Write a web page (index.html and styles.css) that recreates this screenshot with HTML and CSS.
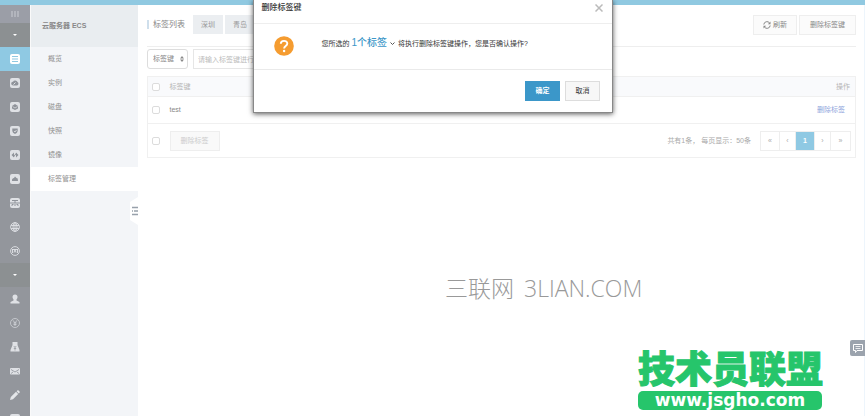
FILE: index.html
```html
<!DOCTYPE html>
<html lang="zh-CN">
<head>
<meta charset="utf-8">
<title>标签管理</title>
<link rel="stylesheet" href="styles.css">
</head>
<body>
<div class="topbar"></div>
<div class="app">
  <nav class="rail" aria-label="产品">
    <button class="rail-menu" aria-label="菜单"><svg width="8" height="6" viewBox="0 0 8 6"><path d="M1 0v6M4 0v6M7 0v6" stroke="#c9ccd2" stroke-width="1"/></svg></button>
    <button class="rail-group" aria-label="展开产品"><svg width="4" height="2" viewBox="0 0 4 2"><path d="M0 0h4L2 2z" fill="#fff"/></svg></button>
    <a class="rail-item active" href="#" aria-label="云服务器"><svg class="icon" viewBox="0 0 10 10"><rect width="10" height="10" rx="2" fill="#fff"/><path d="M2 2.500h6M2 5h6M2 7.500h6" stroke="#8fc8e1" stroke-width="1.200"/></svg></a>
    <a class="rail-item" href="#" aria-label="数据库"><svg class="icon" viewBox="0 0 10 10"><rect width="10" height="10" rx="2" fill="#dfe1e5"/><path d="M2 7a1.800 1.800 0 0 1 1-3.300A2.500 2.500 0 0 1 7.500 4 1.900 1.900 0 0 1 7 7.500H3z" fill="#8f939a"/><path d="M3.500 6.500L5.500 4.500" stroke="#dfe1e5"/></svg></a>
    <a class="rail-item" href="#" aria-label="存储"><svg class="icon" viewBox="0 0 10 10"><rect width="10" height="10" rx="2" fill="#dfe1e5"/><path d="M5 2l3 2v2.500L5 8 2 6.500V4z" fill="#8f939a"/><path d="M2.500 4.500L5 6l2.500-1.500" fill="none" stroke="#dfe1e5" stroke-width=".7"/></svg></a>
    <a class="rail-item" href="#" aria-label="安全"><svg class="icon" viewBox="0 0 10 10"><rect width="10" height="10" rx="2" fill="#dfe1e5"/><path d="M2.300 2.500h5.400V5Q7.500 7 5 8 2.500 7 2.300 5z" fill="#8f939a"/><path d="M4 5l1 1 1.500-2" fill="none" stroke="#dfe1e5" stroke-width=".8"/></svg></a>
    <a class="rail-item" href="#" aria-label="网络"><svg class="icon" viewBox="0 0 10 10"><rect width="10" height="10" rx="2" fill="#dfe1e5"/><path d="M1.500 5L4 2.500v5zM8.500 5L6 7.500v-5z" fill="#8f939a"/><path d="M3.500 7L6.500 3" stroke="#8f939a"/></svg></a>
    <a class="rail-item" href="#" aria-label="云盘"><svg class="icon" viewBox="0 0 10 10"><rect width="10" height="10" rx="2" fill="#dfe1e5"/><path d="M2 7V5.500l1-1.200L4 4l1-1.500L6.500 4l1.200.5L8 7z" fill="#8f939a"/></svg></a>
    <a class="rail-item" href="#" aria-label="负载均衡"><svg class="icon" viewBox="0 0 10 10"><rect width="10" height="10" rx="2" fill="#dfe1e5"/><path d="M2 2.500h6M0 5h10M5 3v2M2 8V6.500h1.500M8 8V6.500H6.500M5 6v2" fill="none" stroke="#8f939a"/></svg></a>
    <a class="rail-item" href="#" aria-label="域名"><svg class="icon" viewBox="0 0 10 10"><g fill="none" stroke="#dfe1e5" stroke-width=".9"><circle cx="5" cy="5" r="4.400"/><ellipse cx="5" cy="5" rx="2" ry="4.400"/><path d="M1 3.500h8M1 6.500h8M5 .5v9"/></g></svg></a>
    <a class="rail-item" href="#" aria-label="监控"><svg class="icon" viewBox="0 0 10 10"><g fill="none" stroke="#dfe1e5" stroke-width=".9"><circle cx="5" cy="5" r="4.400"/><path d="M2.500 3v4M4 6.500l1-3 1 3M7.500 3v4M2 3.500h6"/></g></svg></a>
    <button class="rail-group" aria-label="展开用户中心"><svg width="4" height="2" viewBox="0 0 4 2"><path d="M0 0h4L2 2z" fill="#fff"/></svg></button>
    <a class="rail-item" href="#" aria-label="账号"><svg class="icon" viewBox="0 0 10 10"><circle cx="5" cy="3" r="2.500" fill="#dfe1e5"/><path d="M.5 9.500V8L3.500 6.500V5h3v1.500L9.500 8v1.500z" fill="#dfe1e5"/></svg></a>
    <a class="rail-item" href="#" aria-label="费用"><svg class="icon" viewBox="0 0 10 10"><g fill="none" stroke="#d0d3d8" stroke-width=".8"><circle cx="5" cy="5" r="4.500"/><path d="M3 2.300L5 5l2-2.700M5 5v3M3.500 5h3M3.500 6.500h3"/></g></svg></a>
    <a class="rail-item" href="#" aria-label="续费"><svg class="icon" viewBox="0 0 10 10"><path d="M2.500 0h5v3L9.500 8v1.500H.5V8l2-5z" fill="#dfe1e5"/><path d="M3.800 4L5 5.500 6.200 4M5 5.500v3M3.800 6.500h2.400" fill="none" stroke="#8f939a" stroke-width=".7"/></svg></a>
    <a class="rail-item" href="#" aria-label="消息"><svg class="icon" viewBox="0 0 10 10"><rect y="2" width="10" height="6.500" rx="1" fill="#dfe1e5"/><path d="M1 3.500L5 6l4-2.500M1 7.500l2-1.500M9 7.500L7 6" fill="none" stroke="#8f939a" stroke-width=".8"/></svg></a>
    <a class="rail-item" href="#" aria-label="工单"><svg class="icon" viewBox="0 0 10 10"><path d="M0 10l.8-3L6 1.800 8.200 4 3 9.200zM6.600 1.200L8 0l2 2-1.200 1.400z" fill="#e4e6e9"/></svg></a>
    <a class="rail-item" href="#" aria-label="备案"><svg class="icon" viewBox="0 0 10 10"><rect width="10" height="10" rx="2" fill="#dfe1e5"/><path d="M2 4h6M2 6h6" stroke="#8f939a"/></svg></a>
  </nav>

  <aside class="sidebar">
    <h1 class="product">云服务器 ECS</h1>
    <a class="side-link" href="#">概览</a>
    <a class="side-link" href="#">实例</a>
    <a class="side-link" href="#">磁盘</a>
    <a class="side-link" href="#">快照</a>
    <a class="side-link" href="#">镜像</a>
    <a class="side-link current" href="#">标签管理</a>
    <button class="collapse" aria-label="收起侧栏"><svg width="8" height="28" viewBox="0 0 8 28"><path d="M8 0L0 5v18l8 5z" fill="#fff"/><path d="M2 10.500h6M4 14h4M2 17.500h6M2 14h1" stroke="#98a1ab" stroke-width="1.500"/></svg></button>
  </aside>

  <main class="content">
    <header class="page-head">
      <h2 class="page-title">标签列表</h2>
      <button class="region">深圳</button>
      <button class="region">青岛</button>
      <div class="actions">
        <button class="btn refresh"><svg width="8" height="8" viewBox="0 0 8 8"><path d="M.8 3.500A3.200 3.200 0 0 1 6.600 2M7.200 4.500A3.200 3.200 0 0 1 1.400 6" fill="none" stroke="#888"/><path d="M7.500.5v2.700H4.800zM.5 7.500V4.800h2.700z" fill="#888"/></svg>刷新</button>
        <button class="btn">删除标签键</button>
      </div>
    </header>

    <form class="filters">
      <div class="select-wrap">
        <select class="select" aria-label="筛选字段"><option>标签键</option></select>
        <svg class="arrows" width="4" height="6" viewBox="0 0 4 6"><path d="M0 2.500L2 0l2 2.500zM0 3.500L2 6l2-2.500z" fill="#888"/></svg>
      </div>
      <input class="search" type="text" aria-label="标签键" placeholder="请输入标签键进行精确查询">
    </form>

    <table class="table">
      <thead>
        <tr><th class="check"><input class="box" type="checkbox" aria-label="全选"></th><th>标签键</th><th class="ops">操作</th></tr>
      </thead>
      <tbody>
        <tr><td class="check"><input class="box" type="checkbox" aria-label="选择 test"></td><td>test</td><td class="ops row-ops"><a href="#">删除标签</a></td></tr>
      </tbody>
      <tfoot>
        <tr>
          <td class="check"><input class="box" type="checkbox" aria-label="选择本页"></td>
          <td colspan="2">
            <div class="foot">
              <button class="btn muted" disabled>删除标签</button>
              <span class="total">共有1条， 每页显示：50条</span>
              <div class="pager"><button class="edge">«</button><button>‹</button><button class="edge on">1</button><button>›</button><button class="edge">»</button></div>
            </div>
          </td>
        </tr>
      </tfoot>
    </table>
  </main>
</div>

<section class="dialog" role="dialog" aria-labelledby="dialog-title">
  <header class="dialog-head">
    <h2 id="dialog-title">删除标签键</h2>
    <button class="close" aria-label="关闭"><svg width="8" height="8" viewBox="0 0 8 8"><path d="M.5.5l7 7M7.500.5l-7 7" stroke="#bbb" stroke-width="1.500"/></svg></button>
  </header>
  <div class="dialog-body">
    <svg class="question" width="20" height="20" viewBox="0 0 20 20"><circle cx="10" cy="10" r="9.800" fill="#f59c30"/><path d="M6.800 7.800C6.800 3.800 13.300 4 13.300 7.500c0 2.500-3.200 2.500-3.200 5" fill="none" stroke="#fff" stroke-width="1.900"/><circle cx="10.100" cy="15" r="1.200" fill="#fff"/></svg>
    <p>您所选的 <a class="count" href="#">1个标签</a><svg class="caret" width="5" height="4" viewBox="0 0 5 4"><path d="M.5.5l2 2 2-2" fill="none" stroke="#555"/></svg>将执行删除标签键操作，您是否确认操作?</p>
  </div>
  <footer class="dialog-foot">
    <button class="btn primary">确定</button>
    <button class="btn cancel">取消</button>
  </footer>
</section>

<div class="mark-thin"><span class="mark-cn">三联网</span><span>3LIAN.COM</span></div>
<div class="mark-green"><div class="mark-name">技术员联盟</div><div class="mark-url">www.jsgho.com</div></div>
<button class="feedback" aria-label="反馈"><svg width="10" height="9" viewBox="0 0 10 9"><path d="M.5.5h9v6H4L2.500 8.500v-2h-2z" fill="none" stroke="#fff"/><path d="M2.500 2.500h5M2.500 4.500h5" stroke="#fff" stroke-width=".8"/></svg></button>
</body>
</html>
```

FILE: styles.css
```css
* { box-sizing: border-box; }
body {
  margin: 0;
  min-height: 100vh;
  display: flex;
  flex-direction: column;
  position: relative;
  overflow: hidden;
  background: #fff;
  color: #999;
  font: 7px/12px "Liberation Sans", "Noto Sans CJK SC", sans-serif;
}
button, input, select { font: inherit; color: inherit; margin: 0; }
button { border: 0; padding: 0; background: none; white-space: nowrap; }
a { color: inherit; text-decoration: none; }
h1, h2, p { margin: 0; font-size: inherit; font-weight: normal; }
svg { flex: none; }

.topbar { height: 5px; background: #90c9e1; }
.app { flex: 1; display: flex; height: calc(100vh - 5px); border-bottom: 1px solid #eaf3fa; }

.rail { width: 30px; flex: none; overflow: hidden; background: #93969c; }
.rail-menu, .rail-group, .rail-item {
  display: flex;
  align-items: center;
  justify-content: center;
  width: 100%;
  height: 24px;
}
.rail-menu { height: 18px; background: #9b9ea7; }
.rail-group { background: #8c9092; }
.rail-item.active { background: #8fc9e3; }
.icon { width: 10px; height: 10px; }

.sidebar { width: 108px; flex: none; position: relative; background: #f3f5f8; border-left: 1px solid #fafafa; }
.product {
  height: 42px;
  padding-left: 11px;
  background: #e9edf0;
  color: #888;
  font-weight: bold;
  line-height: 42px;
}
.side-link { display: block; height: 24px; padding-left: 17px; line-height: 24px; color: #909090; }
.side-link.current { background: #fff; }
.collapse { position: absolute; right: 0; top: 192px; height: 28px; }

.content { flex: 1; min-width: 0; padding: 0 8px 0 9px; border-right: 1px solid #edf5fc; }
.page-head { display: flex; align-items: center; gap: 2px; height: 42px; padding-bottom: 2px; border-bottom: 1px solid #eee; }
.page-title {
  margin-right: 6px;
  padding-left: 4px;
  border-left: 2px solid #cfdfec;
  color: #888;
  font-size: 8px;
  line-height: 9px;
}
.region { width: 30px; height: 19px; background: #ebeef1; }
.actions { display: flex; gap: 2px; margin-left: auto; }
.btn { height: 20px; padding: 0 10px; border: 1px solid #eee; background: #fbfbfb; color: #888; }
.btn.refresh { display: flex; align-items: center; gap: 2px; padding: 0 9px; }

.filters { display: flex; gap: 5px; padding: 2px 0 7px; }
.select-wrap { position: relative; }
.select {
  width: 41px;
  height: 20px;
  padding: 0 5px;
  appearance: none;
  border: 1px solid #ddd;
  border-radius: 3px;
  background: #fff;
  color: #888;
}
.arrows { position: absolute; right: 4px; top: 7px; }
.search { width: 120px; height: 20px; padding: 0 4px; border: 1px solid #e6e6e6; background: #fff; }
.search::placeholder { color: #bbb; }

.table { width: 100%; border-collapse: collapse; border: 1px solid #f0f0f0; }
.table tr { border-bottom: 1px solid #f0f0f0; }
.table th, .table td { padding: 0; text-align: left; font-weight: normal; }
.table th { height: 20px; background: #f9fafc; color: #b5b5b5; }
.table tbody td { height: 27px; color: #888; }
.table tfoot td { height: 34px; }
.table .check { width: 22px; padding-left: 4px; }
.table .ops { padding-right: 5px; text-align: right; }
.table .row-ops { padding-right: 10px; color: #8fa5dc; }
.box {
  display: block;
  width: 8px;
  height: 8px;
  appearance: none;
  border: 1px solid #dcdcdc;
  border-radius: 2px;
  background: #fff;
}
.foot { display: flex; align-items: center; padding-right: 4px; }
.btn.muted { width: 50px; background: #f9f9f9; color: #ccc; }
.total { margin: 0 9px 0 auto; color: #aaa; white-space: pre; }
.pager { display: flex; border: 1px solid #eee; }
.pager button { width: 16px; height: 18px; border-right: 1px solid #eee; color: #aaa; }
.pager .edge { width: 19px; }
.pager button:last-child { border-right: 0; }
.pager .on { background: #8fc9e3; color: #fff; font-weight: bold; }

.dialog {
  position: absolute;
  top: 0;
  left: 50%;
  width: 360px;
  transform: translateX(-50%);
  background: #fff;
  color: #333;
  border: 1px solid #888;
  border-top: 0;
  box-shadow: 0 1px 5px rgba(0, 0, 0, .65);
}
.dialog-head { display: flex; justify-content: space-between; height: 24px; padding: 2px 9px 0 8px; border-bottom: 1px solid #eee; }
.dialog-head h2 { font-size: 8px; line-height: 12px; font-weight: 500; }
.close { height: 12px; display: flex; align-items: center; }
.dialog-body { display: flex; gap: 28px; height: 46px; padding: 12px 20px 0; border-bottom: 1px solid #eaeaea; }
.dialog-body p { line-height: 14px; white-space: nowrap; }
.count { color: #3c97c8; font-size: 10px; font-weight: 500; }
.caret { margin: 0 3px; }
.dialog-foot { display: flex; justify-content: flex-end; gap: 5px; padding: 11px 12px; }
.dialog-foot .btn { width: 35px; color: #333; }
.dialog-foot .primary { background: #3b97c9; border-color: #3b97c9; color: #fff; font-weight: bold; }
.dialog-foot .cancel { background: #f7f7f7; border-color: #ddd; }

.mark-thin {
  position: absolute;
  left: 445px;
  top: 272px;
  display: flex;
  gap: 10px;
  color: #999;
  font: 300 23px/32px "Open Sans", "Noto Sans CJK SC", sans-serif;
}
.mark-green { position: absolute; right: 43px; top: 352px; width: 184px; }
.mark-name {
  color: #26c56b;
  font: 900 37px/38px "Liberation Sans", "Noto Sans CJK SC", sans-serif;
  white-space: nowrap;
  -webkit-text-stroke: 1px #26c56b;
}
.mark-url {
  margin-top: 1px;
  border-radius: 5px;
  background: #26c56b;
  color: #fff;
  font: bold 17px/19px "DejaVu Sans", sans-serif;
  text-align: center;
}
.feedback {
  position: absolute;
  right: 0;
  top: 340px;
  width: 15px;
  height: 16px;
  display: flex;
  align-items: center;
  justify-content: center;
  border-radius: 2px 0 0 2px;
  background: #9ba3ad;
}
```
